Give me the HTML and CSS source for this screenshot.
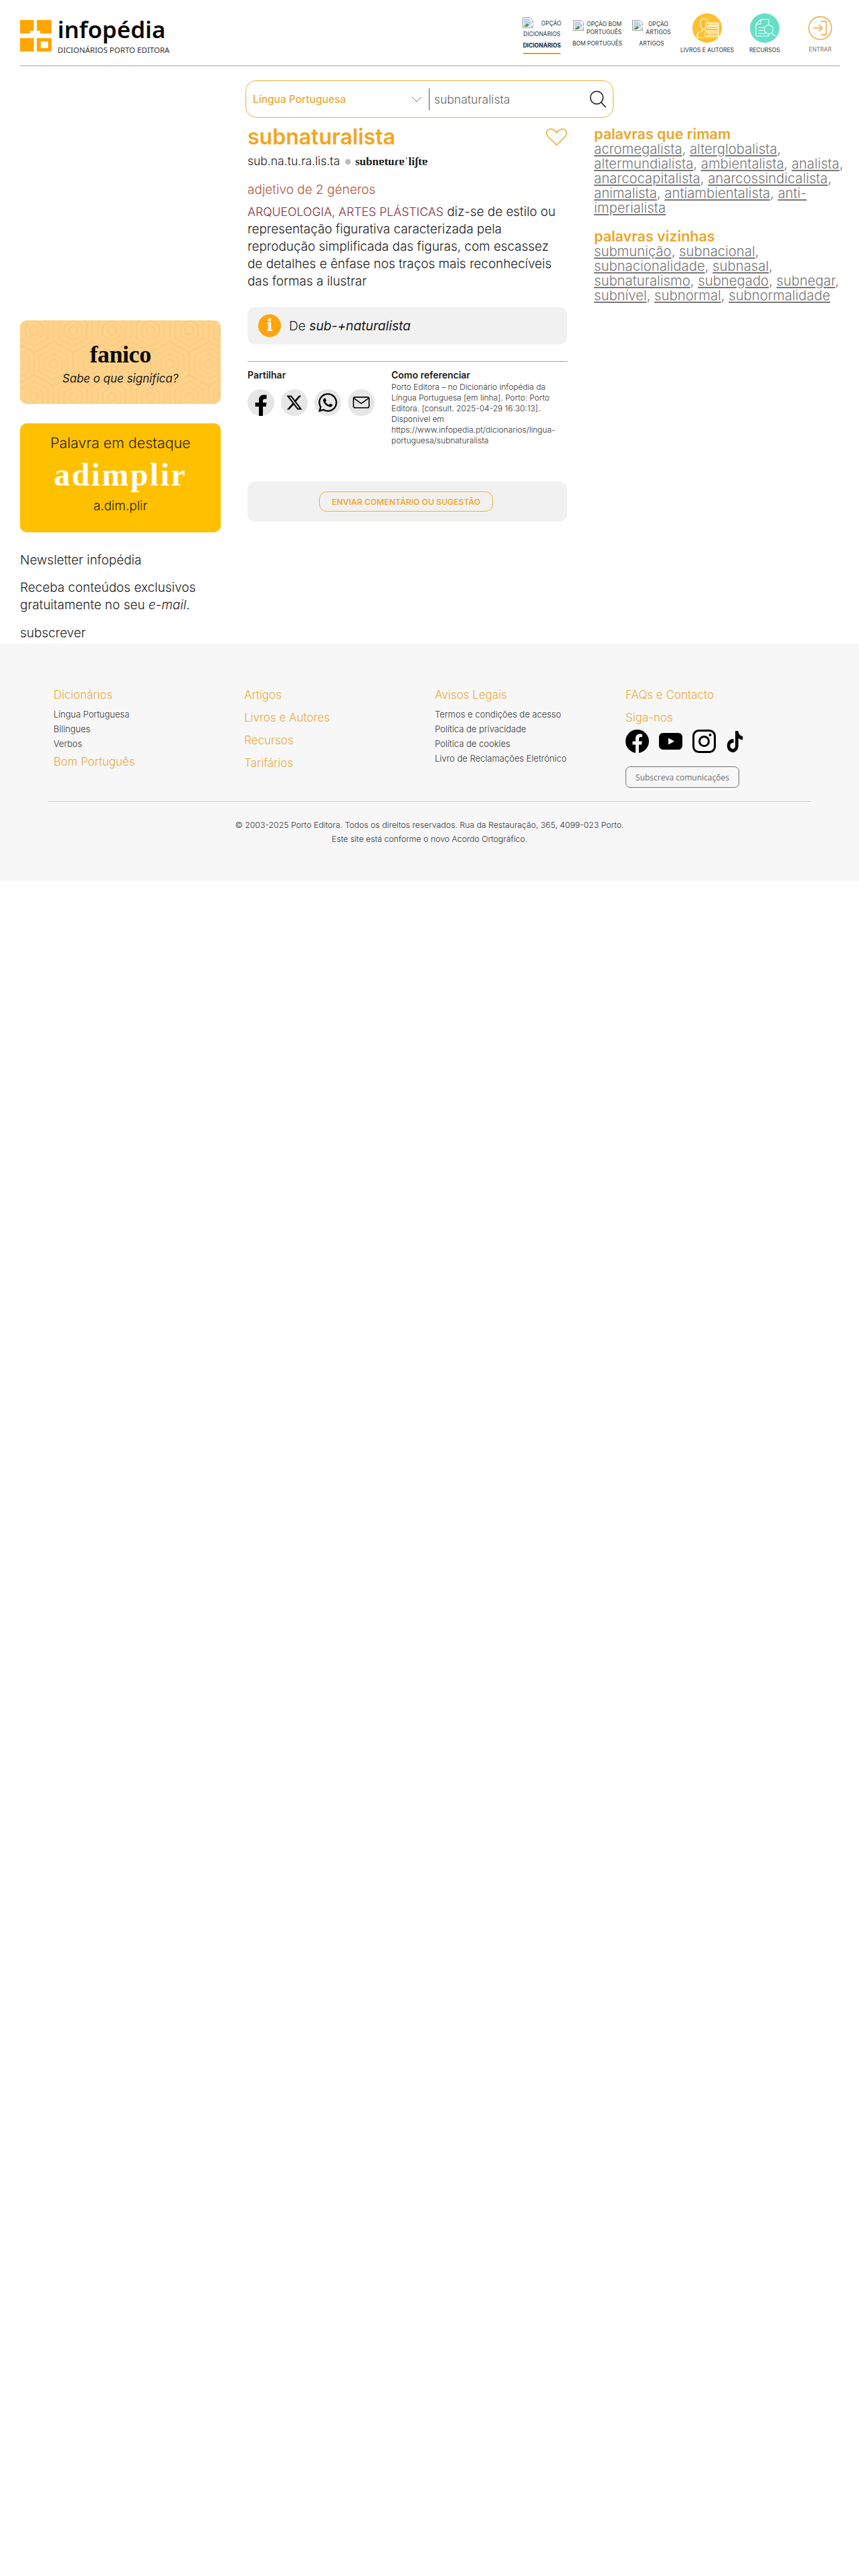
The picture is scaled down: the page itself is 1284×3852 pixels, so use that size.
FILE: index.html
```html
<!DOCTYPE html>
<html lang="pt">
<head>
  <meta charset="UTF-8" />
  <meta name="viewport" content="width=device-width, initial-scale=1" />
  <title>subnaturalista - Infopédia</title>
  <link rel="stylesheet" href="styles.css">
</head>
<body>
  <header class="topo">
    <a class="logo" href="#">
      <svg class="logo-marca" viewBox="0 0 47 47">
        <rect width="47" height="47" fill="#ffa600"/>
        <path d="M20.500 0h4.500v47h-4.500zM0 20h47v7H0zM15 16h15v4H15z" fill="#fff"/>
        <rect x="31" y="32" width="11" height="10" fill="#fff"/>
      </svg>
      <span class="logo-texto">
        <span class="logo-nome">infopédia</span>
        <span class="logo-sub">DICIONÁRIOS PORTO EDITORA</span>
      </span>
    </a>

    <nav class="menu">
      <a class="menu-item menu-dic" href="#">
        <span class="alt alt-linha">
          <svg class="partida espaco" viewBox="0 0 16 16"><use href="#img-partida"/></svg>OPÇÃO<br>DICIONÁRIOS
        </span>
        <span class="menu-label ativo">DICIONÁRIOS</span>
      </a>
      <a class="menu-item menu-bom" href="#">
        <span class="alt">
          <svg class="partida" viewBox="0 0 16 16"><use href="#img-partida"/></svg>
          <span>OPÇÃO BOM<br>PORTUGUÊS</span>
        </span>
        <span class="menu-label">BOM PORTUGUÊS</span>
      </a>
      <a class="menu-item menu-art" href="#">
        <span class="alt">
          <svg class="partida" viewBox="0 0 16 16"><use href="#img-partida"/></svg>
          <span>OPÇÃO<br>ARTIGOS</span>
        </span>
        <span class="menu-label">ARTIGOS</span>
      </a>
      <a class="menu-item menu-livros" href="#">
        <svg class="circulo" viewBox="0 0 44 44">
          <circle cx="22" cy="22" r="22" fill="#fdc02f"/>
          <g fill="none" stroke="#fff" stroke-width="1.100">
            <path d="M17 24c-3-1-5-4-5-8v-3c0-3 2-5 5-5s5 1 6 4"/>
            <path d="M15 24v2c-2 1-8 2-8 6v4h11"/>
            <path d="M21 14h18v5H21c-1.500-1-1.500-4 0-5zM39 15.500H23M39 17.500H23"/>
            <path d="M20 20h19v6H20c-1.500-1-1.500-5 0-6zM39 22.500H22"/>
            <path d="M20 28h19v7H20c-1.500-1.500-1.500-5.500 0-7zM39 30H22M39 33H22"/>
          </g>
        </svg>
        <span class="menu-label">LIVROS E AUTORES</span>
      </a>
      <a class="menu-item menu-rec" href="#">
        <svg class="circulo" viewBox="0 0 44 44">
          <circle cx="22" cy="22" r="22" fill="#66dfc6"/>
          <g fill="none" stroke="#fff" stroke-width="1.100">
            <path d="M28 17V9H16l-7 7v18h19v-4"/>
            <path d="M9 16h7V9"/>
            <path d="M13 21h9M13 25.500h8M13 30h10"/>
            <circle cx="28" cy="24" r="6.500"/>
            <path d="M32.500 29l5 5"/>
          </g>
        </svg>
        <span class="menu-label">RECURSOS</span>
      </a>
      <a class="menu-item menu-entrar" href="#">
        <svg class="circulo-entrar" viewBox="0 0 36 36">
          <g fill="none" stroke="#e8a63a" stroke-width="1.400">
            <circle cx="18" cy="18" r="17"/>
            <path d="M19 8h8v20h-8M8 18h13M16 13l5 5-5 5"/>
          </g>
        </svg>
        <span class="menu-label cinza">ENTRAR</span>
      </a>
    </nav>
  </header>

  <main class="conteudo">
    <aside class="lateral">
      <a class="card-fanico" href="#">
        <svg class="padrao" width="300" height="125">
          <defs>
            <pattern id="hexagonos" width="58" height="100" patternUnits="userSpaceOnUse" x="-8" y="-35">
              <g fill="none" stroke="#fbc67a" stroke-width="1">
                <g id="hexa">
                  <polygon points="29,17 58,33.500 58,66.500 29,83 0,66.500 0,33.500" transform="translate(-29,-50)"/>
                  <polygon points="29,26 50,38 50,62 29,74 8,62 8,38" transform="translate(-29,-50)"/>
                  <polygon points="29,35 42,42.500 42,57.500 29,65 16,57.500 16,42.500" transform="translate(-29,-50)"/>
                  <polygon points="29,43 35,46.500 35,53.500 29,57 23,53.500 23,46.500" transform="translate(-29,-50)"/>
                </g>
                <use href="#hexa" x="58"/>
                <use href="#hexa" y="100"/>
                <use href="#hexa" x="58" y="100"/>
                <use href="#hexa" x="29" y="50"/>
              </g>
            </pattern>
          </defs>
          <rect width="300" height="125" fill="url(#hexagonos)"/>
        </svg>
        <strong>fanico</strong>
        <em>Sabe o que significa?</em>
      </a>

      <a class="card-destaque" href="#">
        <span class="destaque-titulo">Palavra em destaque</span>
        <strong>adimplir</strong>
        <span class="destaque-sil">a.dim.plir</span>
      </a>

      <p class="news news-titulo">Newsletter infopédia</p>
      <p class="news">Receba conteúdos exclusivos gratuitamente no seu <em>e-mail</em>.</p>
      <p class="news news-sub">subscrever</p>
    </aside>

    <form class="pesquisa">
      <div class="pesquisa-lingua">
        <span>Língua Portuguesa</span>
        <svg width="16" height="9" viewBox="0 0 16 9"><path d="M1 1l7 7 7-7" fill="none" stroke="#777" stroke-width="1"/></svg>
      </div>
      <div class="pesquisa-termo">
        <span>subnaturalista</span>
        <svg width="26" height="26" viewBox="0 0 26 26">
          <circle cx="11" cy="11" r="9.500" fill="none" stroke="#111" stroke-width="1.500"/>
          <path d="M17.500 18l7 7.500" stroke="#111" stroke-width="1.500"/>
        </svg>
      </div>
    </form>

    <article class="entrada">
      <div class="entrada-topo">
        <h1>subnaturalista</h1>
        <svg width="32" height="26" viewBox="0 0 32 26"><path d="M16 25L3 12C-2 5 4-1 10 1.500c3 1 5 3 6 5 1-2 3-4 6-5C28-1 34 5 29 12z" fill="none" stroke="#f0a92e" stroke-width="1.500"/></svg>
      </div>
      <p class="pron">sub.na.tu.ra.lis.ta <i class="ponto"></i> <span class="ipa">subnɐtuɾɐˈliʃtɐ</span></p>
      <h2 class="classe">adjetivo de 2 géneros</h2>
      <p class="definicao"><span class="dominio">ARQUEOLOGIA, ARTES PLÁSTICAS</span> diz-se de estilo ou representação figurativa caracterizada pela reprodução simplificada das figuras, com escassez de detalhes e ênfase nos traços mais reconhecíveis das formas a ilustrar</p>

      <div class="etimologia">
        <span class="info">i</span>
        <span>De <em>sub-+naturalista</em></span>
      </div>

      <div class="partilha">
        <div class="partilhar">
          <h3>Partilhar</h3>
          <div class="partilhar-icones">
            <a class="redondo" href="#"><svg width="40" height="40" viewBox="0 0 40 40"><path d="M17 40V26h-5.500v-6H17v-4c0-5 3-7.500 7-7.500h4.500v6H26c-2 0-3 1-3 3V20h5.500l-1 6H23v14z" fill="#000"/></svg></a>
            <a class="redondo" href="#"><svg width="26" height="26" viewBox="0 0 24 24"><path d="M18.244 2.250h3.308l-7.227 8.260 8.502 11.240H16.170l-5.214-6.817L4.990 21.750H1.680l7.730-8.835L1.254 2.250H8.080l4.713 6.231zm-1.161 17.520h1.833L7.084 4.126H5.117z" fill="#000"/></svg></a>
            <a class="redondo" href="#"><svg width="28" height="28" viewBox="0 0 24 24"><path d="M17.472 14.382c-.297-.149-1.758-.867-2.030-.967-.273-.099-.471-.148-.670.150-.197.297-.767.966-.940 1.164-.173.199-.347.223-.644.075-.297-.150-1.255-.463-2.390-1.475-.883-.788-1.480-1.761-1.653-2.059-.173-.297-.018-.458.130-.606.134-.133.298-.347.446-.520.149-.174.198-.298.298-.497.099-.198.050-.371-.025-.520-.075-.149-.669-1.612-.916-2.207-.242-.579-.487-.500-.669-.510-.173-.008-.371-.010-.570-.010-.198 0-.520.074-.792.372-.272.297-1.040 1.016-1.040 2.479 0 1.462 1.065 2.875 1.213 3.074.149.198 2.096 3.200 5.077 4.487.709.306 1.262.489 1.694.625.712.227 1.360.195 1.871.118.571-.085 1.758-.719 2.006-1.413.248-.694.248-1.289.173-1.413-.074-.124-.272-.198-.570-.347m-5.421 7.403h-.004a9.870 9.870 0 01-5.031-1.378l-.361-.214-3.741.982.998-3.648-.235-.374a9.860 9.860 0 01-1.510-5.260c.001-5.450 4.436-9.884 9.888-9.884 2.640 0 5.122 1.030 6.988 2.898a9.825 9.825 0 012.893 6.994c-.003 5.450-4.437 9.884-9.885 9.884m8.413-18.297A11.815 11.815 0 0012.050 0C5.495 0 .160 5.335.157 11.892c0 2.096.547 4.142 1.588 5.945L.057 24l6.305-1.654a11.882 11.882 0 005.683 1.448h.005c6.554 0 11.890-5.335 11.893-11.893a11.821 11.821 0 00-3.480-8.413z" fill="#000"/></svg></a>
            <a class="redondo" href="#"><svg width="26" height="20" viewBox="0 0 28 22"><rect x="1.200" y="2" width="25.600" height="17.500" rx="2.500" fill="none" stroke="#000" stroke-width="1.800"/><path d="M2 4l12 8.500L26 4" fill="none" stroke="#000" stroke-width="1.800"/></svg></a>
          </div>
        </div>
        <div class="referenciar">
          <h3>Como referenciar</h3>
          <p>Porto Editora – no Dicionário infopédia da Língua Portuguesa [em linha]. Porto: Porto Editora. [consult. 2025-04-29 16:30:13]. Disponível em https://www.infopedia.pt/dicionarios/lingua-portuguesa/subnaturalista</p>
        </div>
      </div>

      <div class="comentario">
        <a class="btn-comentario" href="#">ENVIAR COMENTÁRIO OU SUGESTÃO</a>
      </div>
    </article>

    <aside class="relacionadas">
      <h2>palavras que rimam</h2>
      <p><a href="#">acromegalista</a>, <a href="#">alterglobalista</a>, <a href="#">altermundialista</a>, <a href="#">ambientalista</a>, <a href="#">analista</a>, <a href="#">anarcocapitalista</a>, <a href="#">anarcossindicalista</a>, <a href="#">animalista</a>, <a href="#">antiambientalista</a>, <a href="#">anti-imperialista</a></p>
      <h2>palavras vizinhas</h2>
      <p><a href="#">submunição</a>, <a href="#">subnacional</a>, <a href="#">subnacionalidade</a>, <a href="#">subnasal</a>, <a href="#">subnaturalismo</a>, <a href="#">subnegado</a>, <a href="#">subnegar</a>, <a href="#">subnível</a>, <a href="#">subnormal</a>, <a href="#">subnormalidade</a></p>
    </aside>
  </main>

  <footer class="rodape">
    <div class="rodape-colunas">
      <div>
        <a class="rodape-titulo" href="#">Dicionários</a>
        <ul>
          <li>Língua Portuguesa</li>
          <li>Bilingues</li>
          <li>Verbos</li>
        </ul>
        <a class="rodape-titulo" href="#">Bom Português</a>
      </div>
      <div>
        <a class="rodape-titulo solto" href="#">Artigos</a>
        <a class="rodape-titulo solto" href="#">Livros e Autores</a>
        <a class="rodape-titulo solto" href="#">Recursos</a>
        <a class="rodape-titulo solto" href="#">Tarifários</a>
      </div>
      <div>
        <a class="rodape-titulo" href="#">Avisos Legais</a>
        <ul>
          <li>Termos e condições de acesso</li>
          <li>Política de privacidade</li>
          <li>Política de cookies</li>
          <li>Livro de Reclamações Eletrónico</li>
        </ul>
      </div>
      <div>
        <a class="rodape-titulo solto" href="#">FAQs e Contacto</a>
        <a class="rodape-titulo" href="#">Siga-nos</a>
        <div class="redes">
          <svg width="35" height="35" viewBox="0 0 35 35"><circle cx="17.500" cy="17.500" r="17.500" fill="#000"/><path d="M15 35V22.500h-4.500v-5H15v-4c0-4.500 2.500-7 6.500-7 2 0 3.500.3 3.500.3v4.200h-2.200c-2 0-2.800 1.300-2.800 2.700v3.800h4.800l-.8 5h-4V35z" fill="#f7f7f7"/></svg>
          <svg width="35" height="35" viewBox="0 0 35 35"><rect y="5" width="35" height="25" rx="6" fill="#000"/><path d="M14 12.500l9 5-9 5z" fill="#f7f7f7"/></svg>
          <svg width="35" height="35" viewBox="0 0 35 35"><rect x="1.500" y="1.500" width="32" height="32" rx="8" fill="none" stroke="#000" stroke-width="3"/><circle cx="17.500" cy="17.500" r="7" fill="none" stroke="#000" stroke-width="3"/><circle cx="26.500" cy="8" r="2" fill="#000"/></svg>
          <svg width="27" height="32" viewBox="0 0 24 24" preserveAspectRatio="none"><path d="M12.525.020c1.310-.020 2.610-.010 3.910-.020.080 1.530.630 3.090 1.750 4.170 1.120 1.110 2.700 1.620 4.240 1.790v4.030c-1.440-.050-2.890-.350-4.200-.970-.570-.260-1.100-.590-1.620-.930-.010 2.920.010 5.840-.020 8.750-.080 1.400-.540 2.790-1.350 3.940-1.310 1.920-3.580 3.170-5.910 3.210-1.430.080-2.860-.310-4.080-1.030-2.020-1.190-3.440-3.370-3.650-5.710-.020-.500-.030-1-.010-1.490.180-1.900 1.120-3.720 2.580-4.960 1.660-1.440 3.980-2.130 6.150-1.720.020 1.480-.040 2.960-.040 4.440-.990-.320-2.150-.230-3.020.370-.630.410-1.110 1.040-1.360 1.750-.210.510-.150 1.070-.140 1.610.240 1.640 1.820 3.020 3.500 2.870 1.120-.010 2.190-.660 2.770-1.610.190-.330.400-.670.410-1.060.100-1.790.060-3.570.070-5.360.010-4.030-.010-8.050.020-12.070z" fill="#000"/></svg>
        </div>
        <a class="btn-subscreva" href="#">Subscreva comunicações</a>
      </div>
    </div>
    <div class="rodape-fim">
      <p>© 2003-2025 Porto Editora. Todos os direitos reservados. Rua da Restauração, 365, 4099-023 Porto.</p>
      <p>Este site está conforme o novo Acordo Ortográfico.</p>
    </div>
  </footer>

  <!-- imagem partida do browser, repetida no menu -->
  <svg width="0" height="0" class="oculto">
    <symbol id="img-partida" viewBox="0 0 16 16">
      <path d="M.5.500h11l4 4v11H.5z" fill="#fff" stroke="#9a9a9a"/>
      <path d="M2 2h9v3.500h3V9L9 14H2z" fill="#c4d4ee"/>
      <path d="M2 14l5-5 3 2-3 3z" fill="#4f9a3a"/>
      <path d="M11 14l3-3v3z" fill="#4f9a3a"/>
      <path d="M10 15L16 9" stroke="#fff" stroke-width="1.500"/>
    </symbol>
  </svg>
</body>
</html>
```

FILE: styles.css
```css
*, *::before, *::after { box-sizing: border-box; }
body {
  margin: 0;
  font-family: Inter, "Open Sans", sans-serif;
  color: #1a1a1a;
  background: #fff;
}
a {
  color: inherit;
  text-decoration: none;
}
p, h1, h2, h3, ul {
  margin: 0;
  padding: 0;
}
.oculto { position: absolute; }

/* Topo */
.topo {
  display: flex;
  justify-content: space-between;
  align-items: flex-start;
  height: 99px;
  margin: 0 29px 0 30px;
  padding-right: 11px;
  border-bottom: 1px solid #a3a3a3;
}
.logo {
  display: flex;
  gap: 9px;
  margin-top: 30px;
}
.logo-marca {
  width: 47px;
  height: 47px;
}
.logo-texto {
  display: flex;
  flex-direction: column;
  width: 162px;
  margin-top: -5px;
}
.logo-nome {
  font-family: "Noto Sans", sans-serif;
  font-size: 35px;
  font-weight: 600;
  line-height: 37px;
  color: #0a0a0a;
}
.logo-sub {
  margin-top: 6px;
  font-family: "Noto Sans", sans-serif;
  font-size: 11.500px;
  line-height: 13px;
  white-space: nowrap;
  color: #333;
}
.menu {
  display: flex;
  align-items: flex-start;
  font-size: 8.500px;
  color: #333;
}
.menu-item {
  display: flex;
  flex-direction: column;
  align-items: center;
  text-align: center;
}
.menu-dic { width: 70px; margin-top: 26px; }
.menu-bom { width: 76px; margin: 30px 0 0 10px; }
.menu-art { width: 66px; margin: 30px 0 0 10px; }
.menu-livros { width: 80px; margin: 20px 0 0 10px; }
.menu-rec { width: 44px; margin: 20px 0 0 24px; }
.menu-entrar { width: 36px; margin: 24px 0 0 43px; }
.alt {
  display: flex;
  gap: 4px;
  line-height: 12px;
  white-space: nowrap;
}
.alt-linha {
  display: block;
  line-height: 16px;
}
.partida {
  width: 16px;
  height: 16px;
  flex-shrink: 0;
}
.partida.espaco {
  margin-right: 12px;
  vertical-align: -4px;
}
.menu-label {
  margin-top: 5px;
  line-height: 12px;
  white-space: nowrap;
}
.menu-dic .menu-label { margin-top: 0; }
.menu-label.ativo {
  padding: 3px 0 5px;
  border-bottom: 2px solid #e8a020;
  font-weight: 700;
  color: #222;
}
.circulo {
  width: 44px;
  height: 44px;
}
.circulo-entrar {
  width: 36px;
  height: 36px;
}
.menu-label.cinza {
  margin-top: 8px;
  color: #777;
}

/* Conteúdo */
.conteudo {
  display: grid;
  grid-template-columns: 300px 478px 1fr;
  grid-template-rows: auto 1fr;
  column-gap: 40px;
  padding: 21px 10px 0 30px;
}
.lateral {
  grid-column: 1;
  grid-row: 1 / 3;
  padding-top: 359px;
}
.pesquisa {
  grid-column: 2 / 4;
  grid-row: 1;
  display: flex;
  align-items: center;
  width: 550px;
  height: 56px;
  margin-left: -3px;
  border: 1.500px solid #e8b33f;
  border-radius: 16px;
}
.pesquisa-lingua {
  display: flex;
  justify-content: space-between;
  align-items: center;
  width: 273px;
  padding: 0 10px;
  font-size: 15.500px;
  font-weight: 500;
  color: #eba93b;
}
.pesquisa-termo {
  flex: 1;
  display: flex;
  justify-content: space-between;
  align-items: center;
  height: 33px;
  padding: 0 9px 0 7px;
  border-left: 1px solid #555;
  font-size: 17.500px;
  font-weight: 300;
  color: #666;
}

/* Cartões da esquerda */
.card-fanico {
  position: relative;
  display: flex;
  flex-direction: column;
  align-items: center;
  height: 125px;
  overflow: hidden;
  background: #fdd28a;
  border-radius: 10px;
}
.padrao {
  position: absolute;
  top: 0;
  left: 0;
}
.card-fanico strong {
  position: relative;
  margin-top: 30px;
  font-family: "Liberation Serif", serif;
  font-size: 36px;
  line-height: 42px;
  letter-spacing: -.4px;
  color: #0a0a0a;
}
.card-fanico em {
  position: relative;
  margin-top: 4px;
  font-size: 17px;
  line-height: 22px;
}
.card-destaque {
  display: flex;
  flex-direction: column;
  align-items: center;
  height: 163px;
  margin-top: 29px;
  padding-top: 15px;
  background: #ffc000;
  border-radius: 10px;
}
.destaque-titulo {
  font-size: 21.500px;
  font-weight: 300;
  line-height: 28px;
  color: #2c2500;
}
.card-destaque strong {
  margin-top: 8px;
  font-family: "Liberation Serif", serif;
  font-size: 48px;
  line-height: 52px;
  letter-spacing: 2.500px;
  color: #fff;
}
.destaque-sil {
  margin-top: 9px;
  font-size: 19px;
  font-weight: 300;
  line-height: 24px;
  color: #2c2500;
}
.news {
  font-size: 19px;
  font-weight: 300;
  line-height: 26px;
  color: #222;
}
.news-titulo { margin: 29px 0 15px; }
.news-sub { margin: 16px 0 2px; }

/* Entrada */
.entrada {
  grid-column: 2;
  grid-row: 2;
  padding-top: 8px;
}
.entrada-topo {
  display: flex;
  justify-content: space-between;
}
.entrada-topo svg { margin-top: 8px; }
.entrada h1 {
  font-size: 32px;
  font-weight: 600;
  line-height: 42px;
  color: #f3a51d;
}
.pron {
  margin-top: 3px;
  font-size: 17.500px;
  font-weight: 300;
  line-height: 24px;
}
.ponto {
  display: inline-block;
  width: 8px;
  height: 8px;
  margin: 0 2px 1px 3px;
  background: #bbb;
  border-radius: 50%;
}
.ipa {
  font-family: "Liberation Serif", serif;
  font-size: 17px;
  font-weight: 700;
}
.classe {
  margin-top: 18px;
  font-size: 19px;
  font-weight: 300;
  line-height: 24px;
  color: #b5573a;
}
.definicao {
  margin-top: 8px;
  padding-right: 10px;
  font-size: 18.900px;
  font-weight: 300;
  line-height: 26px;
}
.dominio {
  font-size: 17.700px;
  color: #7f2d3a;
}
.etimologia {
  display: flex;
  align-items: center;
  gap: 12px;
  height: 56px;
  margin-top: 25px;
  padding-left: 16px;
  background: #f1f1f1;
  border-radius: 12px;
  font-size: 19.200px;
  font-weight: 300;
}
.etimologia em { font-weight: 400; }
.info {
  width: 34px;
  height: 34px;
  background: #ffa40c;
  border-radius: 50%;
  font-family: "DejaVu Serif", serif;
  font-size: 24px;
  font-weight: 700;
  line-height: 34px;
  text-align: center;
  color: #fff;
}
.partilha {
  display: flex;
  height: 180px;
  margin-top: 25px;
  padding-top: 11px;
  border-top: 1px solid #a3a3a3;
}
.partilhar {
  flex: 0 0 215px;
}
.partilha h3 {
  font-size: 14px;
  font-weight: 600;
  line-height: 18px;
}
.partilhar-icones {
  display: flex;
  gap: 10px;
  margin-top: 12px;
}
.redondo {
  display: flex;
  justify-content: center;
  align-items: center;
  width: 40px;
  height: 40px;
  overflow: hidden;
  background: #e6e6e6;
  border-radius: 50%;
}
.referenciar p {
  margin-top: 1px;
  font-size: 12px;
  font-weight: 300;
  line-height: 16px;
  color: #333;
}
.comentario {
  display: flex;
  justify-content: center;
  align-items: center;
  height: 60px;
  padding-right: 4px;
  background: #f1f1f1;
  border-radius: 12px;
}
.btn-comentario {
  display: flex;
  justify-content: center;
  align-items: center;
  width: 260px;
  height: 30px;
  border: 1px solid #eeb041;
  border-radius: 11px;
  font-size: 12.200px;
  font-weight: 600;
  color: #eeab35;
}

/* Palavras relacionadas */
.relacionadas {
  grid-column: 3;
  grid-row: 2;
  padding-top: 13px;
}
.relacionadas h2 {
  font-size: 21.500px;
  font-weight: 600;
  line-height: 23px;
  color: #eba628;
}
.relacionadas p {
  margin-bottom: 20px;
  font-size: 20.300px;
  font-weight: 300;
  line-height: 22px;
  color: #777;
}
.relacionadas a { text-decoration: underline; }

/* Rodapé */
.rodape {
  height: 355px;
  padding-top: 65px;
  background: #f7f7f7;
}
.rodape-colunas {
  display: grid;
  grid-template-columns: repeat(4, 285px);
  height: 158px;
  padding-left: 80px;
}
.rodape-titulo {
  display: block;
  font-size: 17px;
  font-weight: 300;
  line-height: 24px;
  color: #eba93b;
}
.rodape-titulo.solto { margin-bottom: 10px; }
.rodape ul {
  margin: 6px 0 4px;
  list-style: none;
  font-size: 13px;
  font-weight: 300;
  line-height: 22px;
  color: #333;
}
.redes {
  display: flex;
  align-items: center;
  gap: 15px;
  height: 35px;
  margin-top: 6px;
}
.btn-subscreva {
  display: flex;
  justify-content: center;
  align-items: center;
  width: 170px;
  height: 32px;
  margin-top: 20px;
  border: 1px solid #6e6e6e;
  border-radius: 7px;
  font-family: "Open Sans", sans-serif;
  font-size: 12px;
  color: #6e6e6e;
}
.rodape-fim {
  margin: 13px 72px 0;
  padding-top: 24px;
  border-top: 1px solid #cfcfcf;
  font-size: 12.300px;
  font-weight: 300;
  line-height: 21px;
  text-align: center;
  color: #333;
}
```
